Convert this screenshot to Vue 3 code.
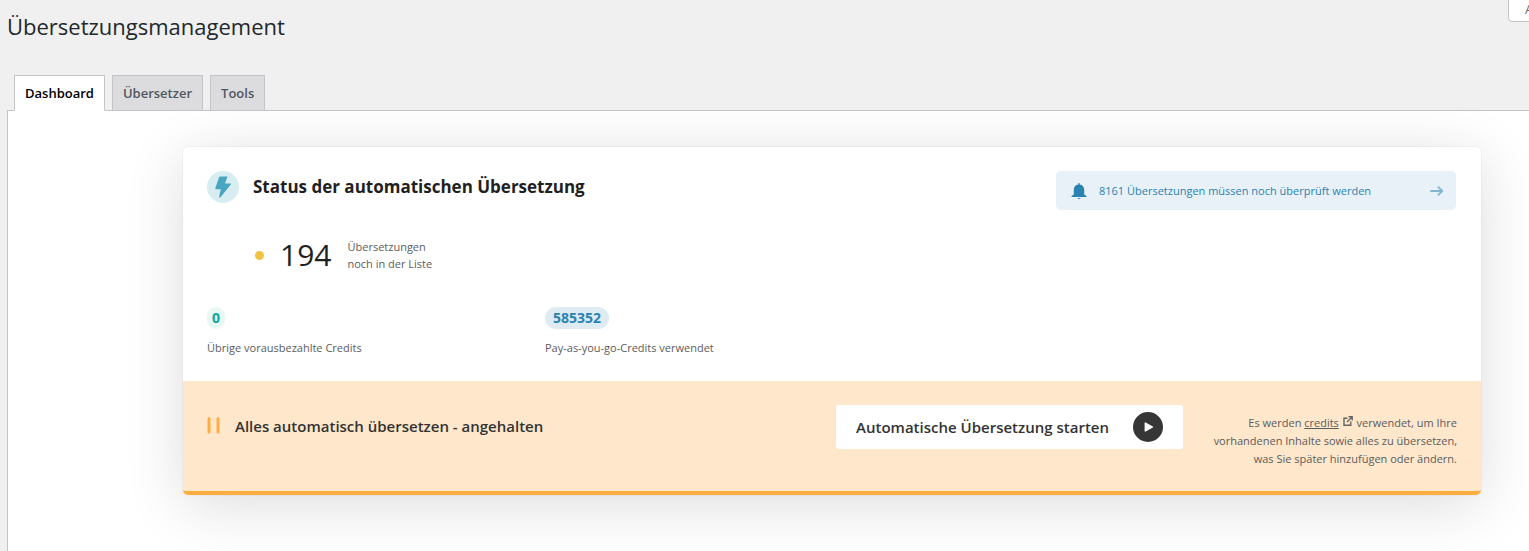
<script setup>
import { ref } from 'vue'

const tabs = ['Dashboard', 'Übersetzer', 'Tools']
const active = ref('Dashboard')
const credits = [
  { value: '0', label: 'Übrige vorausbezahlte Credits', tone: 'green' },
  { value: '585352', label: 'Pay-as-you-go-Credits verwendet', tone: 'blue' },
]
</script>

<template>
  <div class="page">
    <button class="screen-options" type="button">Ansicht anpassen</button>
    <h1>Übersetzungsmanagement</h1>

    <nav class="tabs">
      <button
        v-for="tab in tabs"
        :key="tab"
        type="button"
        class="tab"
        :class="{ active: tab === active }"
        @click="active = tab"
      >{{ tab }}</button>
    </nav>

    <main class="panel">
      <section class="card">
        <div class="body">
          <header class="head">
            <span class="bolt">
              <svg width="18" height="22" viewBox="0 0 18 22" aria-hidden="true">
                <path d="M6 0.5H13.5L11 7.5H16.5Q17.3 7.6 16.8 8.5L6.5 21.2Q5 22 5.2 20.6L6.8 13.2H2Q1 13 1.3 12.2L5 1.2Q5.3 0.6 6 0.5Z" fill="#48a6c1" />
              </svg>
            </span>
            <h2>Status der automatischen Übersetzung</h2>
            <a class="notice" href="#">
              <svg width="16" height="16" viewBox="0 0 16 16" aria-hidden="true">
                <path d="M7.4 0H8.6V1.4C11.6 1.8 13.2 4 13.2 7V11.6L15.5 13V14H0.5V13L2.8 11.6V7C2.8 4 4.4 1.8 7.4 1.4Z M6.4 15H9.6Q9.2 16 8 16Q6.8 16 6.4 15Z" fill="#2a82b0" />
              </svg>
              <span class="notice-text">8161 Übersetzungen müssen noch überprüft werden</span>
              <svg width="14" height="12" viewBox="0 0 14 12" aria-hidden="true">
                <path d="M1 6H12M8.4 2.2L12.2 6L8.4 9.8" fill="none" stroke="#82b7d2" stroke-width="1.9" stroke-linecap="round" stroke-linejoin="round" />
              </svg>
            </a>
          </header>

          <div class="queue">
            <span class="dot"></span>
            <strong class="count">194</strong>
            <p>Übersetzungen<br>noch in der Liste</p>
          </div>

          <div class="credits">
            <div v-for="c in credits" :key="c.label" class="credit">
              <span class="pill" :class="c.tone">{{ c.value }}</span>
              <p>{{ c.label }}</p>
            </div>
          </div>
        </div>

        <footer class="foot">
          <div class="state">
            <svg width="13" height="18" viewBox="0 0 13 18" aria-hidden="true">
              <path d="M2 1.5V15M11 1.5V15" stroke="#ffad41" stroke-width="3" stroke-linecap="round" />
            </svg>
            <span>Alles automatisch übersetzen - angehalten</span>
          </div>
          <button class="start" type="button">
            <span>Automatische Übersetzung starten</span>
            <svg width="30" height="30" viewBox="0 0 30 30" aria-hidden="true">
              <circle cx="15" cy="15" r="15" fill="#363636" />
              <path d="M12.3 11L19.5 15L12.3 19Z" fill="#fff" stroke="#fff" stroke-width="1.4" stroke-linejoin="round" />
            </svg>
          </button>
          <p class="note">
            Es werden <a href="#">credits</a> <svg width="10" height="10" viewBox="0 0 10 10" aria-hidden="true"><path d="M4.5 2.2H1V9.2H7.8V5.6M5.6 0.8H9.2V4.4M9 1L4 6" fill="none" stroke="#646464" stroke-width="1.4" /></svg> verwendet, um Ihre vorhandenen Inhalte sowie alles zu übersetzen, was Sie später hinzufügen oder ändern.
          </p>
        </footer>
      </section>
    </main>
  </div>
</template>

<style>
body {
  background: #f0f0f1;
  overflow: hidden;
}
</style>

<style scoped>
.page {
  position: relative;
  min-height: 100vh;
  box-sizing: border-box;
  display: flex;
  flex-direction: column;
  padding: 10px 0 0 7px;
  overflow: hidden;
  background: #f0f0f0;
  color: #23282d;
  font-family: "Segoe UI", "Open Sans", "Noto Sans", sans-serif;
}
h1, h2, p { margin: 0; }
button { font-family: inherit; }
.screen-options {
  position: absolute;
  top: -4px;
  left: calc(100% - 21px);
  height: 26px;
  padding: 0 16px;
  border: 1px solid #c3c4c7;
  border-radius: 0 0 4px 4px;
  background: #fff;
  color: #646970;
  font-size: 13px;
  line-height: 14px;
  white-space: nowrap;
}
h1 {
  font-size: 22px;
  font-weight: 400;
  line-height: 33px;
}
.tabs {
  display: flex;
  gap: 7px;
  margin: 32px 0 -1px 7px;
  position: relative;
  z-index: 1;
}
.tab {
  height: 36px;
  padding: 0 10px;
  border: 1px solid #c3c4c7;
  background: #dcdcde;
  color: #50575e;
  font-size: 13px;
  font-weight: 600;
  line-height: 24px;
}
.tab.active {
  background: #fff;
  border-bottom-color: #fff;
  color: #000;
}
.panel {
  flex: 1;
  padding: 36px 48px 56px 175px;
  border: 1px solid #c3c4c7;
  border-width: 1px 0 0 1px;
  background: #fff;
}
.card {
  border-radius: 5px;
  background: #fff;
  box-shadow: 0 0 1px 1px rgba(0, 0, 0, 0.03), 0 10px 60px rgba(0, 0, 0, 0.14);
}
.body { padding: 24px 25px 25px 24px; }
.head {
  display: flex;
  align-items: flex-start;
}
.bolt {
  display: grid;
  place-items: center;
  width: 32px;
  height: 32px;
  margin-right: 14px;
  border-radius: 50%;
  background: #d8edf2;
}
h2 {
  color: #1f1f1f;
  font-size: 17px;
  font-weight: 700;
  line-height: 32px;
}
.notice {
  display: flex;
  align-items: center;
  width: 400px;
  height: 39px;
  box-sizing: border-box;
  margin-left: auto;
  padding: 0 12px 0 15px;
  border-radius: 5px;
  background: #e8f1f7;
  color: #2a82b0;
  font-size: 11px;
  text-decoration: none;
}
.notice-text { flex: 1; margin-left: 12px; }
.queue {
  display: flex;
  align-items: center;
  height: 40px;
  margin: 25px 0 0 48px;
}
.dot {
  width: 9px;
  height: 9px;
  border-radius: 50%;
  background: #efc342;
}
.count {
  margin: 0 16px;
  color: #1f1f1f;
  font-size: 30px;
  font-weight: 400;
  line-height: 40px;
}
p {
  color: #5c5c5c;
  font-size: 11px;
  line-height: 17px;
}
.credits {
  display: grid;
  grid-template-columns: 338px 1fr;
  margin-top: 32px;
}
.credit {
  display: flex;
  flex-direction: column;
  align-items: flex-start;
  gap: 10px;
}
.pill {
  padding: 0 8px;
  border-radius: 11px;
  font-size: 14px;
  font-weight: 700;
  line-height: 22px;
}
.pill.green { padding: 0 5px; background: #e6f7f4; color: #0ea698; }
.pill.blue { background: #dfebf3; color: #2a82b0; }
.foot {
  display: flex;
  align-items: flex-start;
  padding: 24px 24px 23px;
  min-height: 63px;
  border-bottom: 4px solid #ffad41;
  border-radius: 0 0 5px 5px;
  background: #fee7cb;
}
.state {
  display: flex;
  align-items: center;
  gap: 15px;
  margin-top: 10px;
  color: #333;
  font-size: 15px;
  font-weight: 600;
  line-height: 22px;
}
.start {
  display: flex;
  align-items: center;
  gap: 24px;
  height: 44px;
  margin: 0 24px 0 auto;
  padding: 0 20px;
  border: 0;
  border-radius: 3px;
  background: #fff;
  color: #333;
  font-size: 15px;
  font-weight: 600;
}
.note {
  width: 250px;
  padding: 9px 0 0;
  line-height: 18px;
  text-align: right;
}
.note a { color: inherit; }
.note svg { margin: 0 1px; vertical-align: 1px; }
</style>
